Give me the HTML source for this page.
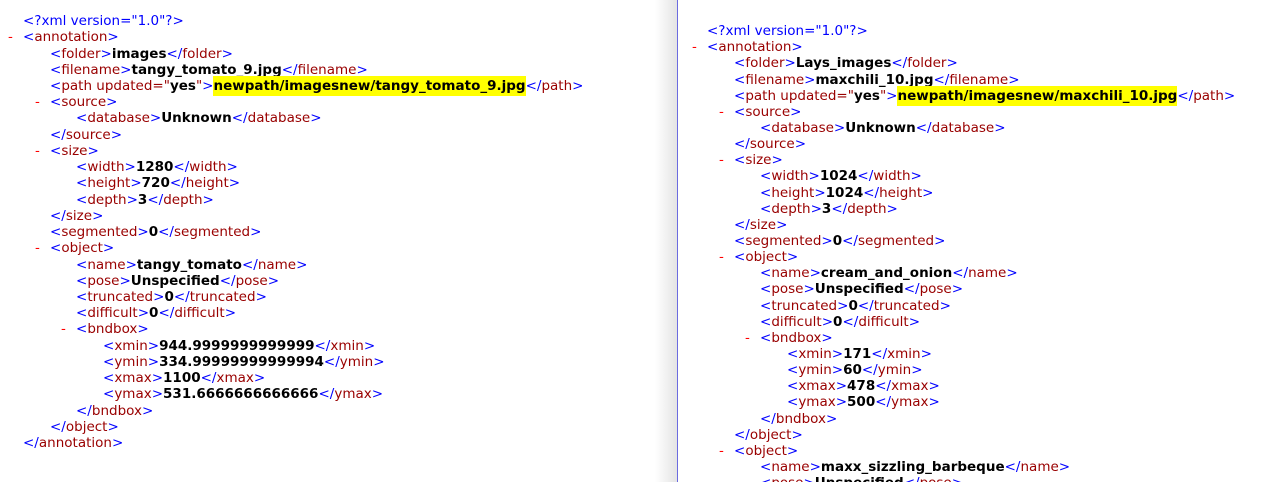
<!DOCTYPE html>
<html><head><meta charset="utf-8"><style>
html,body{margin:0;padding:0;background:#fff;width:1277px;height:482px;overflow:hidden;position:relative}
.p{position:absolute;top:0;font-family:"DejaVu Sans",Verdana,sans-serif;font-size:13.5px;line-height:16.2px;white-space:pre}
.l{position:absolute;white-space:pre}
.b{color:#0000ff}.t{color:#990000}.v{color:#000;font-weight:bold}.m{color:#ff0000;position:absolute;left:-15px}
.h{background:#ffff00;padding:2px 0}
#sh{position:absolute;left:655px;top:0;width:22px;height:482px;background:linear-gradient(to right,#fff,#e4e4e4)}
#dv{position:absolute;left:677px;top:0;width:1px;height:482px;background:#6b6be0}
</style></head><body>
<div id="sh"></div><div id="dv"></div>

<div class="p" style="left:0;top:13px">
<div class="l" style="left:23px;top:0"><span class="b">&lt;?xml version="1.0"?&gt;</span></div>
<div class="l" style="left:23px;top:16.2px"><span class="m">-</span><span class="b">&lt;</span><span class="t">annotation</span><span class="b">&gt;</span></div>
<div class="l" style="left:50px;top:32.5px"><span class="b">&lt;</span><span class="t">folder</span><span class="b">&gt;</span><span class="v">images</span><span class="b">&lt;/</span><span class="t">folder</span><span class="b">&gt;</span></div>
<div class="l" style="left:50px;top:48.7px"><span class="b">&lt;</span><span class="t">filename</span><span class="b">&gt;</span><span class="v">tangy_tomato_9.jpg</span><span class="b">&lt;/</span><span class="t">filename</span><span class="b">&gt;</span></div>
<div class="l" style="left:50px;top:64.9px"><span class="b">&lt;</span><span class="t">path updated="</span><span class="v">yes</span><span class="t">"</span><span class="b">&gt;</span><span class="v h">newpath/imagesnew/tangy_tomato_9.jpg</span><span class="b">&lt;/</span><span class="t">path</span><span class="b">&gt;</span></div>
<div class="l" style="left:50px;top:81.1px"><span class="m">-</span><span class="b">&lt;</span><span class="t">source</span><span class="b">&gt;</span></div>
<div class="l" style="left:76px;top:97.4px"><span class="b">&lt;</span><span class="t">database</span><span class="b">&gt;</span><span class="v">Unknown</span><span class="b">&lt;/</span><span class="t">database</span><span class="b">&gt;</span></div>
<div class="l" style="left:50px;top:113.6px"><span class="b">&lt;/</span><span class="t">source</span><span class="b">&gt;</span></div>
<div class="l" style="left:50px;top:129.8px"><span class="m">-</span><span class="b">&lt;</span><span class="t">size</span><span class="b">&gt;</span></div>
<div class="l" style="left:76px;top:146.1px"><span class="b">&lt;</span><span class="t">width</span><span class="b">&gt;</span><span class="v">1280</span><span class="b">&lt;/</span><span class="t">width</span><span class="b">&gt;</span></div>
<div class="l" style="left:76px;top:162.3px"><span class="b">&lt;</span><span class="t">height</span><span class="b">&gt;</span><span class="v">720</span><span class="b">&lt;/</span><span class="t">height</span><span class="b">&gt;</span></div>
<div class="l" style="left:76px;top:178.5px"><span class="b">&lt;</span><span class="t">depth</span><span class="b">&gt;</span><span class="v">3</span><span class="b">&lt;/</span><span class="t">depth</span><span class="b">&gt;</span></div>
<div class="l" style="left:50px;top:194.8px"><span class="b">&lt;/</span><span class="t">size</span><span class="b">&gt;</span></div>
<div class="l" style="left:50px;top:211px"><span class="b">&lt;</span><span class="t">segmented</span><span class="b">&gt;</span><span class="v">0</span><span class="b">&lt;/</span><span class="t">segmented</span><span class="b">&gt;</span></div>
<div class="l" style="left:50px;top:227.2px"><span class="m">-</span><span class="b">&lt;</span><span class="t">object</span><span class="b">&gt;</span></div>
<div class="l" style="left:76px;top:243.5px"><span class="b">&lt;</span><span class="t">name</span><span class="b">&gt;</span><span class="v">tangy_tomato</span><span class="b">&lt;/</span><span class="t">name</span><span class="b">&gt;</span></div>
<div class="l" style="left:76px;top:259.7px"><span class="b">&lt;</span><span class="t">pose</span><span class="b">&gt;</span><span class="v">Unspecified</span><span class="b">&lt;/</span><span class="t">pose</span><span class="b">&gt;</span></div>
<div class="l" style="left:76px;top:275.9px"><span class="b">&lt;</span><span class="t">truncated</span><span class="b">&gt;</span><span class="v">0</span><span class="b">&lt;/</span><span class="t">truncated</span><span class="b">&gt;</span></div>
<div class="l" style="left:76px;top:292.1px"><span class="b">&lt;</span><span class="t">difficult</span><span class="b">&gt;</span><span class="v">0</span><span class="b">&lt;/</span><span class="t">difficult</span><span class="b">&gt;</span></div>
<div class="l" style="left:76px;top:308.4px"><span class="m">-</span><span class="b">&lt;</span><span class="t">bndbox</span><span class="b">&gt;</span></div>
<div class="l" style="left:103px;top:324.6px"><span class="b">&lt;</span><span class="t">xmin</span><span class="b">&gt;</span><span class="v">944.9999999999999</span><span class="b">&lt;/</span><span class="t">xmin</span><span class="b">&gt;</span></div>
<div class="l" style="left:103px;top:340.8px"><span class="b">&lt;</span><span class="t">ymin</span><span class="b">&gt;</span><span class="v">334.99999999999994</span><span class="b">&lt;/</span><span class="t">ymin</span><span class="b">&gt;</span></div>
<div class="l" style="left:103px;top:357.1px"><span class="b">&lt;</span><span class="t">xmax</span><span class="b">&gt;</span><span class="v">1100</span><span class="b">&lt;/</span><span class="t">xmax</span><span class="b">&gt;</span></div>
<div class="l" style="left:103px;top:373.3px"><span class="b">&lt;</span><span class="t">ymax</span><span class="b">&gt;</span><span class="v">531.6666666666666</span><span class="b">&lt;/</span><span class="t">ymax</span><span class="b">&gt;</span></div>
<div class="l" style="left:76px;top:389.5px"><span class="b">&lt;/</span><span class="t">bndbox</span><span class="b">&gt;</span></div>
<div class="l" style="left:50px;top:405.8px"><span class="b">&lt;/</span><span class="t">object</span><span class="b">&gt;</span></div>
<div class="l" style="left:23px;top:422px"><span class="b">&lt;/</span><span class="t">annotation</span><span class="b">&gt;</span></div>
</div>

<div class="p" style="left:684px;top:23px">
<div class="l" style="left:23px;top:0"><span class="b">&lt;?xml version="1.0"?&gt;</span></div>
<div class="l" style="left:23px;top:16.15px"><span class="m">-</span><span class="b">&lt;</span><span class="t">annotation</span><span class="b">&gt;</span></div>
<div class="l" style="left:50px;top:32.3px"><span class="b">&lt;</span><span class="t">folder</span><span class="b">&gt;</span><span class="v">Lays_images</span><span class="b">&lt;/</span><span class="t">folder</span><span class="b">&gt;</span></div>
<div class="l" style="left:50px;top:48.5px"><span class="b">&lt;</span><span class="t">filename</span><span class="b">&gt;</span><span class="v">maxchili_10.jpg</span><span class="b">&lt;/</span><span class="t">filename</span><span class="b">&gt;</span></div>
<div class="l" style="left:50px;top:64.6px"><span class="b">&lt;</span><span class="t">path updated="</span><span class="v">yes</span><span class="t">"</span><span class="b">&gt;</span><span class="v h">newpath/imagesnew/maxchili_10.jpg</span><span class="b">&lt;/</span><span class="t">path</span><span class="b">&gt;</span></div>
<div class="l" style="left:50px;top:80.8px"><span class="m">-</span><span class="b">&lt;</span><span class="t">source</span><span class="b">&gt;</span></div>
<div class="l" style="left:76px;top:96.9px"><span class="b">&lt;</span><span class="t">database</span><span class="b">&gt;</span><span class="v">Unknown</span><span class="b">&lt;/</span><span class="t">database</span><span class="b">&gt;</span></div>
<div class="l" style="left:50px;top:113px"><span class="b">&lt;/</span><span class="t">source</span><span class="b">&gt;</span></div>
<div class="l" style="left:50px;top:129.2px"><span class="m">-</span><span class="b">&lt;</span><span class="t">size</span><span class="b">&gt;</span></div>
<div class="l" style="left:76px;top:145.3px"><span class="b">&lt;</span><span class="t">width</span><span class="b">&gt;</span><span class="v">1024</span><span class="b">&lt;/</span><span class="t">width</span><span class="b">&gt;</span></div>
<div class="l" style="left:76px;top:161.5px"><span class="b">&lt;</span><span class="t">height</span><span class="b">&gt;</span><span class="v">1024</span><span class="b">&lt;/</span><span class="t">height</span><span class="b">&gt;</span></div>
<div class="l" style="left:76px;top:177.6px"><span class="b">&lt;</span><span class="t">depth</span><span class="b">&gt;</span><span class="v">3</span><span class="b">&lt;/</span><span class="t">depth</span><span class="b">&gt;</span></div>
<div class="l" style="left:50px;top:193.8px"><span class="b">&lt;/</span><span class="t">size</span><span class="b">&gt;</span></div>
<div class="l" style="left:50px;top:209.9px"><span class="b">&lt;</span><span class="t">segmented</span><span class="b">&gt;</span><span class="v">0</span><span class="b">&lt;/</span><span class="t">segmented</span><span class="b">&gt;</span></div>
<div class="l" style="left:50px;top:226.1px"><span class="m">-</span><span class="b">&lt;</span><span class="t">object</span><span class="b">&gt;</span></div>
<div class="l" style="left:76px;top:242.2px"><span class="b">&lt;</span><span class="t">name</span><span class="b">&gt;</span><span class="v">cream_and_onion</span><span class="b">&lt;/</span><span class="t">name</span><span class="b">&gt;</span></div>
<div class="l" style="left:76px;top:258.4px"><span class="b">&lt;</span><span class="t">pose</span><span class="b">&gt;</span><span class="v">Unspecified</span><span class="b">&lt;/</span><span class="t">pose</span><span class="b">&gt;</span></div>
<div class="l" style="left:76px;top:274.5px"><span class="b">&lt;</span><span class="t">truncated</span><span class="b">&gt;</span><span class="v">0</span><span class="b">&lt;/</span><span class="t">truncated</span><span class="b">&gt;</span></div>
<div class="l" style="left:76px;top:290.7px"><span class="b">&lt;</span><span class="t">difficult</span><span class="b">&gt;</span><span class="v">0</span><span class="b">&lt;/</span><span class="t">difficult</span><span class="b">&gt;</span></div>
<div class="l" style="left:76px;top:306.8px"><span class="m">-</span><span class="b">&lt;</span><span class="t">bndbox</span><span class="b">&gt;</span></div>
<div class="l" style="left:103px;top:323px"><span class="b">&lt;</span><span class="t">xmin</span><span class="b">&gt;</span><span class="v">171</span><span class="b">&lt;/</span><span class="t">xmin</span><span class="b">&gt;</span></div>
<div class="l" style="left:103px;top:339.1px"><span class="b">&lt;</span><span class="t">ymin</span><span class="b">&gt;</span><span class="v">60</span><span class="b">&lt;/</span><span class="t">ymin</span><span class="b">&gt;</span></div>
<div class="l" style="left:103px;top:355.3px"><span class="b">&lt;</span><span class="t">xmax</span><span class="b">&gt;</span><span class="v">478</span><span class="b">&lt;/</span><span class="t">xmax</span><span class="b">&gt;</span></div>
<div class="l" style="left:103px;top:371.4px"><span class="b">&lt;</span><span class="t">ymax</span><span class="b">&gt;</span><span class="v">500</span><span class="b">&lt;/</span><span class="t">ymax</span><span class="b">&gt;</span></div>
<div class="l" style="left:76px;top:387.6px"><span class="b">&lt;/</span><span class="t">bndbox</span><span class="b">&gt;</span></div>
<div class="l" style="left:50px;top:403.7px"><span class="b">&lt;/</span><span class="t">object</span><span class="b">&gt;</span></div>
<div class="l" style="left:50px;top:419.9px"><span class="m">-</span><span class="b">&lt;</span><span class="t">object</span><span class="b">&gt;</span></div>
<div class="l" style="left:76px;top:436px"><span class="b">&lt;</span><span class="t">name</span><span class="b">&gt;</span><span class="v">maxx_sizzling_barbeque</span><span class="b">&lt;/</span><span class="t">name</span><span class="b">&gt;</span></div>
<div class="l" style="left:76px;top:452.2px"><span class="b">&lt;</span><span class="t">pose</span><span class="b">&gt;</span><span class="v">Unspecified</span><span class="b">&lt;/</span><span class="t">pose</span><span class="b">&gt;</span></div>
</div>
</body></html>
